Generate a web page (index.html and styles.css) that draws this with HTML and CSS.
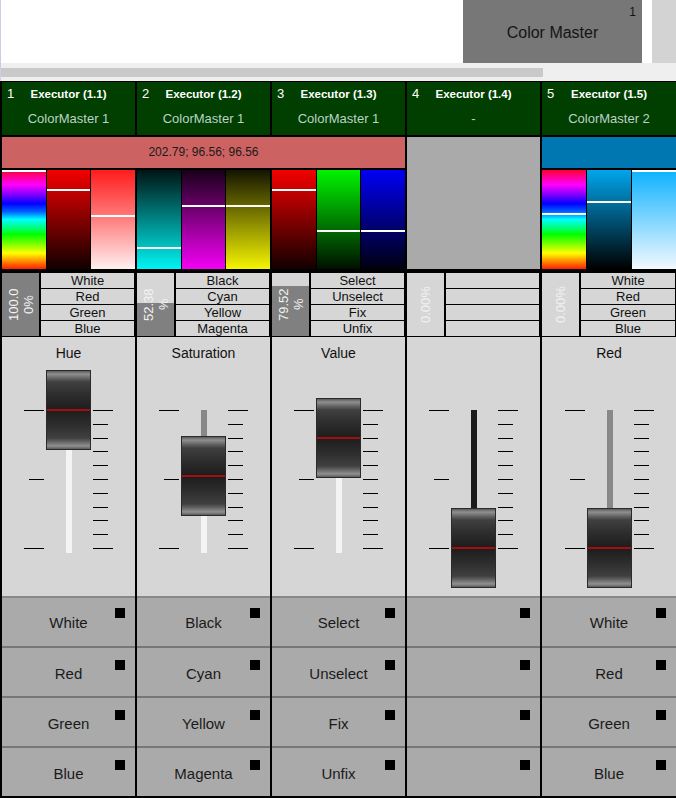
FILE: index.html
```html
<!DOCTYPE html>
<html>
<head>
<meta charset="utf-8">
<link rel="stylesheet" href="styles.css">
</head>
<body>
<div class="top">
  <div class="top-space"></div>
  <div class="cm-btn"><span class="cm-num">1</span><span class="cm-label">Color Master</span></div>
  <div class="top-gap"></div>
  <div class="top-strip"></div>
</div>
<div class="band"><div class="band-bar"></div></div>

<div class="exec">
  <!-- headers -->
  <div class="head"><div class="head-top"><span class="num">1</span><span class="title">Executor (1.1)</span><span></span></div><div class="head-sub">ColorMaster 1</div></div>
  <div class="head"><div class="head-top"><span class="num">2</span><span class="title">Executor (1.2)</span><span></span></div><div class="head-sub">ColorMaster 1</div></div>
  <div class="head"><div class="head-top"><span class="num">3</span><span class="title">Executor (1.3)</span><span></span></div><div class="head-sub">ColorMaster 1</div></div>
  <div class="head"><div class="head-top"><span class="num">4</span><span class="title">Executor (1.4)</span><span></span></div><div class="head-sub">-</div></div>
  <div class="head"><div class="head-top"><span class="num">5</span><span class="title">Executor (1.5)</span><span></span></div><div class="head-sub">ColorMaster 2</div></div>

  <!-- color bars -->
  <div class="cbar cbar-red">202.79; 96.56; 96.56</div>
  <div class="empty-col"></div>
  <div class="cbar cbar-blue"></div>

  <!-- gradients -->
  <div class="grads">
    <div class="strip g-hue"><i class="mark" style="margin-top:0px"></i></div>
    <div class="strip g-red-dark"><i class="mark" style="margin-top:19px"></i></div>
    <div class="strip g-red-light"><i class="mark" style="margin-top:45px"></i></div>
  </div>
  <div class="grads">
    <div class="strip g-cyan"><i class="mark" style="margin-top:77px"></i></div>
    <div class="strip g-magenta"><i class="mark" style="margin-top:35px"></i></div>
    <div class="strip g-yellow"><i class="mark" style="margin-top:35px"></i></div>
  </div>
  <div class="grads">
    <div class="strip g-red-dark"><i class="mark" style="margin-top:19px"></i></div>
    <div class="strip g-green"><i class="mark" style="margin-top:60px"></i></div>
    <div class="strip g-blue"><i class="mark" style="margin-top:60px"></i></div>
  </div>
  <div class="grads">
    <div class="strip g-hue"><i class="mark" style="margin-top:43px"></i></div>
    <div class="strip g-sky-dark"><i class="mark" style="margin-top:31px"></i></div>
    <div class="strip g-sky-light"><i class="mark" style="margin-top:0px"></i></div>
  </div>

  <!-- lists -->
  <div class="list">
    <div class="pct"><div class="fill" style="height:100%"></div><div class="pct-text">100.0<br>0%</div></div>
    <div class="items"><div class="item">White</div><div class="item">Red</div><div class="item">Green</div><div class="item">Blue</div></div>
  </div>
  <div class="list">
    <div class="pct"><div class="fill" style="height:52.38%"></div><div class="pct-text">52.38<br>%</div></div>
    <div class="items"><div class="item">Black</div><div class="item">Cyan</div><div class="item">Yellow</div><div class="item">Magenta</div></div>
  </div>
  <div class="list">
    <div class="pct"><div class="fill" style="height:79.52%"></div><div class="pct-text">79.52<br>%</div></div>
    <div class="items"><div class="item">Select</div><div class="item">Unselect</div><div class="item">Fix</div><div class="item">Unfix</div></div>
  </div>
  <div class="list">
    <div class="pct"><div class="fill" style="height:0%"></div><div class="pct-text">0.00%</div></div>
    <div class="items"><div class="item"></div><div class="item"></div><div class="item"></div><div class="item"></div></div>
  </div>
  <div class="list">
    <div class="pct"><div class="fill" style="height:0%"></div><div class="pct-text">0.00%</div></div>
    <div class="items"><div class="item">White</div><div class="item">Red</div><div class="item">Green</div><div class="item">Blue</div></div>
  </div>

  <!-- faders -->
  <div class="fader">
    <div class="flabel">Hue</div>
    <div class="scale">
      <div class="ticks-l"><i class="tk"></i><i class="tk tk-s"></i><i class="tk"></i></div>
      <div class="track"><div class="up" style="height:0px"></div><div class="down"></div></div>
      <div class="ticks-r"><i class="tk"></i><i class="tk tk-s"></i><i class="tk tk-s"></i><i class="tk tk-s"></i><i class="tk tk-s"></i><i class="tk tk-s"></i><i class="tk tk-s"></i><i class="tk tk-s"></i><i class="tk tk-s"></i><i class="tk tk-s"></i><i class="tk"></i></div>
      <div class="handle" style="top:-40px"><div class="redline"></div></div>
    </div>
  </div>
  <div class="fader">
    <div class="flabel">Saturation</div>
    <div class="scale">
      <div class="ticks-l"><i class="tk"></i><i class="tk tk-s"></i><i class="tk"></i></div>
      <div class="track"><div class="up" style="height:66px"></div><div class="down"></div></div>
      <div class="ticks-r"><i class="tk"></i><i class="tk tk-s"></i><i class="tk tk-s"></i><i class="tk tk-s"></i><i class="tk tk-s"></i><i class="tk tk-s"></i><i class="tk tk-s"></i><i class="tk tk-s"></i><i class="tk tk-s"></i><i class="tk tk-s"></i><i class="tk"></i></div>
      <div class="handle" style="top:26px"><div class="redline"></div></div>
    </div>
  </div>
  <div class="fader">
    <div class="flabel">Value</div>
    <div class="scale">
      <div class="ticks-l"><i class="tk"></i><i class="tk tk-s"></i><i class="tk"></i></div>
      <div class="track"><div class="up" style="height:28px"></div><div class="down"></div></div>
      <div class="ticks-r"><i class="tk"></i><i class="tk tk-s"></i><i class="tk tk-s"></i><i class="tk tk-s"></i><i class="tk tk-s"></i><i class="tk tk-s"></i><i class="tk tk-s"></i><i class="tk tk-s"></i><i class="tk tk-s"></i><i class="tk tk-s"></i><i class="tk"></i></div>
      <div class="handle" style="top:-12px"><div class="redline"></div></div>
    </div>
  </div>
  <div class="fader">
    <div class="flabel"></div>
    <div class="scale">
      <div class="ticks-l"><i class="tk"></i><i class="tk tk-s"></i><i class="tk"></i></div>
      <div class="track"><div class="up up-dark" style="height:138px"></div><div class="down"></div></div>
      <div class="ticks-r"><i class="tk"></i><i class="tk tk-s"></i><i class="tk tk-s"></i><i class="tk tk-s"></i><i class="tk tk-s"></i><i class="tk tk-s"></i><i class="tk tk-s"></i><i class="tk tk-s"></i><i class="tk tk-s"></i><i class="tk tk-s"></i><i class="tk"></i></div>
      <div class="handle" style="top:98px"><div class="redline"></div></div>
    </div>
  </div>
  <div class="fader">
    <div class="flabel">Red</div>
    <div class="scale">
      <div class="ticks-l"><i class="tk"></i><i class="tk tk-s"></i><i class="tk"></i></div>
      <div class="track"><div class="up" style="height:138px"></div><div class="down"></div></div>
      <div class="ticks-r"><i class="tk"></i><i class="tk tk-s"></i><i class="tk tk-s"></i><i class="tk tk-s"></i><i class="tk tk-s"></i><i class="tk tk-s"></i><i class="tk tk-s"></i><i class="tk tk-s"></i><i class="tk tk-s"></i><i class="tk tk-s"></i><i class="tk"></i></div>
      <div class="handle" style="top:98px"><div class="redline"></div></div>
    </div>
  </div>

  <!-- buttons -->
  <div class="btns">
    <div class="btn">White<i class="led"></i></div>
    <div class="btn">Red<i class="led"></i></div>
    <div class="btn">Green<i class="led"></i></div>
    <div class="btn">Blue<i class="led"></i></div>
  </div>
  <div class="btns">
    <div class="btn">Black<i class="led"></i></div>
    <div class="btn">Cyan<i class="led"></i></div>
    <div class="btn">Yellow<i class="led"></i></div>
    <div class="btn">Magenta<i class="led"></i></div>
  </div>
  <div class="btns">
    <div class="btn">Select<i class="led"></i></div>
    <div class="btn">Unselect<i class="led"></i></div>
    <div class="btn">Fix<i class="led"></i></div>
    <div class="btn">Unfix<i class="led"></i></div>
  </div>
  <div class="btns">
    <div class="btn"><i class="led"></i></div>
    <div class="btn"><i class="led"></i></div>
    <div class="btn"><i class="led"></i></div>
    <div class="btn"><i class="led"></i></div>
  </div>
  <div class="btns">
    <div class="btn">White<i class="led"></i></div>
    <div class="btn">Red<i class="led"></i></div>
    <div class="btn">Green<i class="led"></i></div>
    <div class="btn">Blue<i class="led"></i></div>
  </div>
</div>
</body>
</html>
```

FILE: styles.css
```css
* { box-sizing: border-box; }

body {
  margin: 0;
  width: 676px;
  height: 798px;
  overflow: hidden;
  font-family: "Liberation Sans", Arial, sans-serif;
  background: #fff;
}

/* top area */
.top {
  display: flex;
  height: 63px;
  background: #fff;
  border-left: 1px solid #cdcde6;
}
.top-space { flex: 1; }
.cm-btn {
  position: relative;
  width: 179px;
  background: #777777;
  display: flex;
  align-items: center;
  justify-content: center;
  color: #141414;
  font-size: 16px;
  padding-top: 3px;
}
.cm-num {
  position: absolute;
  top: 5px;
  right: 6px;
  font-size: 12px;
}
.top-gap { width: 10px; }
.top-strip { width: 24px; background: #d3d3d3; }

.band {
  height: 18px;
  background: #efefef;
  padding-top: 5px;
  border-left: 1px solid #cdcde6;
}
.band-bar {
  width: 542px;
  height: 9px;
  background: #c9c9c9;
}

/* executor grid */
.exec {
  display: grid;
  grid-template-columns: 133px 133px 133px 133px 1fr;
  column-gap: 2px;
  padding: 1px 0 2px 2px;
  background: #000;
}

.head {
  height: 53px;
  background: #003f00;
  padding-top: 4px;
}
.head-top {
  display: grid;
  grid-template-columns: 1fr auto 1fr;
  height: 16px;
  line-height: 16px;
}
.num {
  padding-left: 5px;
  color: #fff;
  font-size: 13px;
}
.title {
  color: #fff;
  font-weight: bold;
  font-size: 11.5px;
}
.head-sub {
  margin-top: 9px;
  text-align: center;
  line-height: 16px;
  font-size: 13px;
  color: #bcd2c6;
}

.cbar {
  margin-top: 2px;
  height: 31px;
  line-height: 31px;
  text-align: center;
  font-size: 12px;
  color: #1a1a1a;
}
.cbar-red { grid-column: span 3; background: #cd6262; }
.cbar-blue { background: #0077b0; }
.empty-col {
  grid-row: span 2;
  margin-top: 2px;
  background: #aaaaaa;
}

.grads {
  margin-top: 2px;
  height: 99px;
  display: grid;
  grid-template-columns: repeat(3, 1fr);
  column-gap: 1px;
}
.strip { height: 99px; }
.mark {
  display: block;
  height: 2px;
  background: #fff;
}
.g-hue {
  background: linear-gradient(to bottom, #ff0030 0%, #ff00c0 10%, #ff00ff 15%, #8000ff 25%, #0000ff 34%, #0060ff 42%, #00ffff 50%, #00ff80 58%, #00ff00 65%, #80ff00 75%, #ffff00 84%, #ff8000 93%, #ff2000 100%);
}
.g-red-dark { background: linear-gradient(to bottom, #f40000, #120000); }
.g-red-light { background: linear-gradient(to bottom, #ff1c1c, #ff8080 50%, #fff0f0); }
.g-cyan { background: linear-gradient(to bottom, #001414, #00f4f4); }
.g-magenta { background: linear-gradient(to bottom, #180018, #f400f4); }
.g-yellow { background: linear-gradient(to bottom, #141400, #f4f400); }
.g-green { background: linear-gradient(to bottom, #00f400, #001000); }
.g-blue { background: linear-gradient(to bottom, #0000f4, #000010); }
.g-sky-dark { background: linear-gradient(to bottom, #00a6ec, #000000); }
.g-sky-light { background: linear-gradient(to bottom, #0cb2ff, #f2f9ff); }

/* list area */
.list {
  margin-top: 4px;
  margin-bottom: 1px;
  height: 63px;
  display: grid;
  grid-template-columns: 37px 1fr;
  column-gap: 2px;
  padding-right: 1px;
}
.pct {
  position: relative;
  background: #d6d6d6;
  display: flex;
  flex-direction: column;
  justify-content: flex-end;
  overflow: hidden;
}
.fill { background: #808080; }
.pct-text {
  position: absolute;
  top: 0; left: 0; right: 0; bottom: 0;
  writing-mode: vertical-rl;
  transform: rotate(180deg);
  display: flex;
  align-items: center;
  justify-content: center;
  text-align: center;
  color: #f2f2f2;
  font-size: 13px;
  line-height: 15px;
}
.items {
  display: grid;
  grid-template-rows: repeat(4, 1fr);
  row-gap: 1px;
}
.item {
  background: #d6d6d6;
  text-align: center;
  font-size: 13px;
  line-height: 15px;
  color: #111;
}

/* faders */
.fader {
  height: 259px;
  background: #d6d6d6;
  padding-top: 8px;
}
.flabel {
  height: 16px;
  line-height: 16px;
  text-align: center;
  font-size: 14px;
  color: #111;
}
.scale {
  position: relative;
  display: flex;
  width: 89px;
  height: 143px;
  margin: 49px auto 0;
}
.ticks-l, .ticks-r {
  width: 20px;
  height: 139px;
  display: flex;
  flex-direction: column;
  justify-content: space-between;
}
.ticks-l { align-items: flex-end; }
.ticks-r { align-items: flex-start; margin-left: 21px; }
.tk {
  display: block;
  width: 20px;
  height: 1px;
  background: #000;
}
.tk-s { width: 15px; }
.track {
  margin-left: 22px;
  width: 6px;
  height: 143px;
  display: flex;
  flex-direction: column;
}
.up { background: #888888; }
.up-dark { background: #1a1a1a; }
.down { flex: 1; background: #f4f4f4; }
.handle {
  position: absolute;
  left: 22px;
  width: 45px;
  height: 80px;
  border: 1px solid #2a2a2a;
  padding-top: 38px;
  background: linear-gradient(to bottom, #5a5a5a 0%, #909090 4%, #6e6e6e 8%, #404040 14%, #2e2e2e 30%, #1e1e1e 48%, #1e1e1e 52%, #2e2e2e 70%, #404040 86%, #6e6e6e 92%, #909090 96%, #5a5a5a 100%);
}
.redline {
  height: 2px;
  background: #a30e0e;
}

/* buttons */
.btns {
  display: flex;
  flex-direction: column;
  border-top: 2px solid #888;
}
.btn {
  position: relative;
  height: 48px;
  background: #aaaaaa;
  display: flex;
  align-items: center;
  justify-content: center;
  font-size: 15px;
  color: #1a1a1a;
}
.btn + .btn { border-top: 2px solid #777; height: 50px; padding-top: 2px; }
.led {
  position: absolute;
  top: 10px;
  right: 10px;
  width: 10px;
  height: 10px;
  background: #000;
}
.btn + .btn .led { top: 12px; }
```
